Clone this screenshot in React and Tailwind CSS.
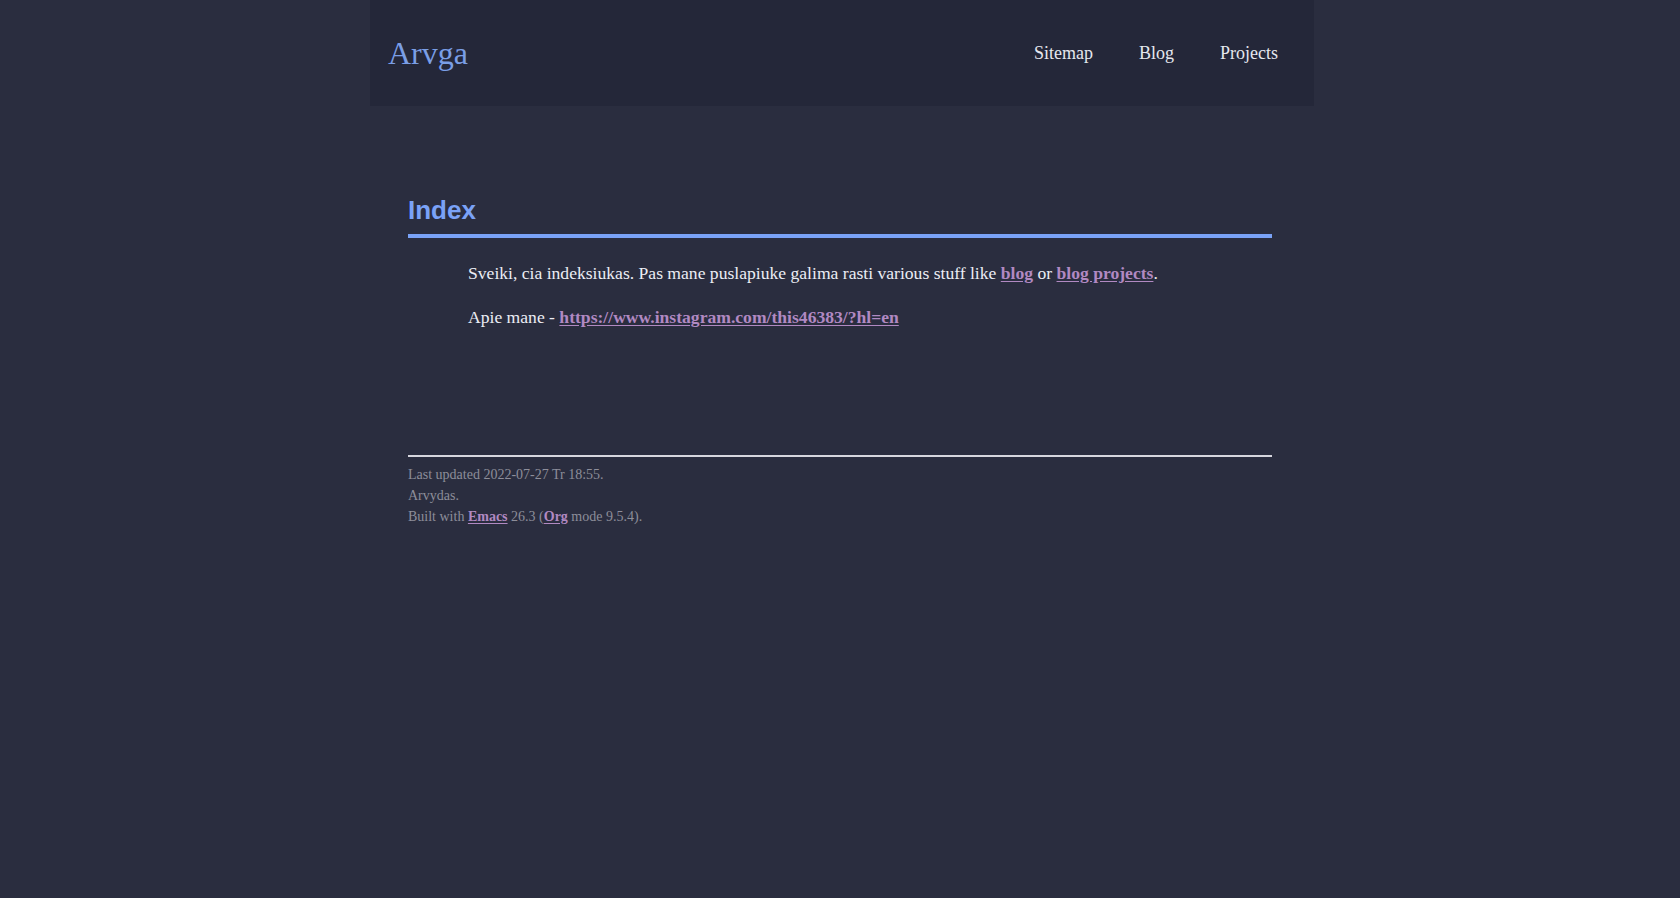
const NAV_LINKS = ["Sitemap", "Blog", "Projects"];

function Header() {
  return (
    <header className="ml-[calc(50%-470px)] flex h-[106px] w-[944px] items-center justify-between bg-[#242739] pl-[18px] pr-[13px]">
      <a href="#" className="text-[32px] leading-none text-[#7a9ee6]">
        Arvga
      </a>
      <nav className="flex">
        {NAV_LINKS.map((label) => (
          <a key={label} href="#" className="px-[23px] text-[18px] leading-none text-[#e6e7ef]">
            {label}
          </a>
        ))}
      </nav>
    </header>
  );
}

function Link({ children }) {
  return (
    <a href="#" className="font-bold text-[#b189c2] underline underline-offset-2">
      {children}
    </a>
  );
}

export default function App() {
  return (
    <div className="min-h-[898px] bg-[#2a2d3f] font-['Liberation_Serif',serif]">
      <Header />

      <main className="mx-auto w-[864px] pt-[89px]">
        <h1 className="border-b-4 border-[#7aa2f7] pb-[9px] font-['Liberation_Sans',sans-serif] text-[26px] font-bold leading-[30px] text-[#7aa2f7]">
          Index
        </h1>

        <div className="mt-[22px] flex flex-col gap-[18px] pl-[60px] text-[17.6px] leading-[26px] text-[#eceef5]">
          <p>
            Sveiki, cia indeksiukas. Pas mane puslapiuke galima rasti various stuff like{" "}
            <Link>blog</Link> or <Link>blog projects</Link>.
          </p>
          <p>
            Apie mane - <Link>https://www.instagram.com/this46383/?hl=en</Link>
          </p>
        </div>

        <footer className="mt-[125px] border-t-2 border-[#d6d6de] pt-[7px] text-[14px] leading-[21px] text-[#8d8e9a]">
          <p>Last updated 2022-07-27 Tr 18:55.</p>
          <p>Arvydas.</p>
          <p>
            Built with <Link>Emacs</Link> 26.3 (<Link>Org</Link> mode 9.5.4).
          </p>
        </footer>
      </main>
    </div>
  );
}
